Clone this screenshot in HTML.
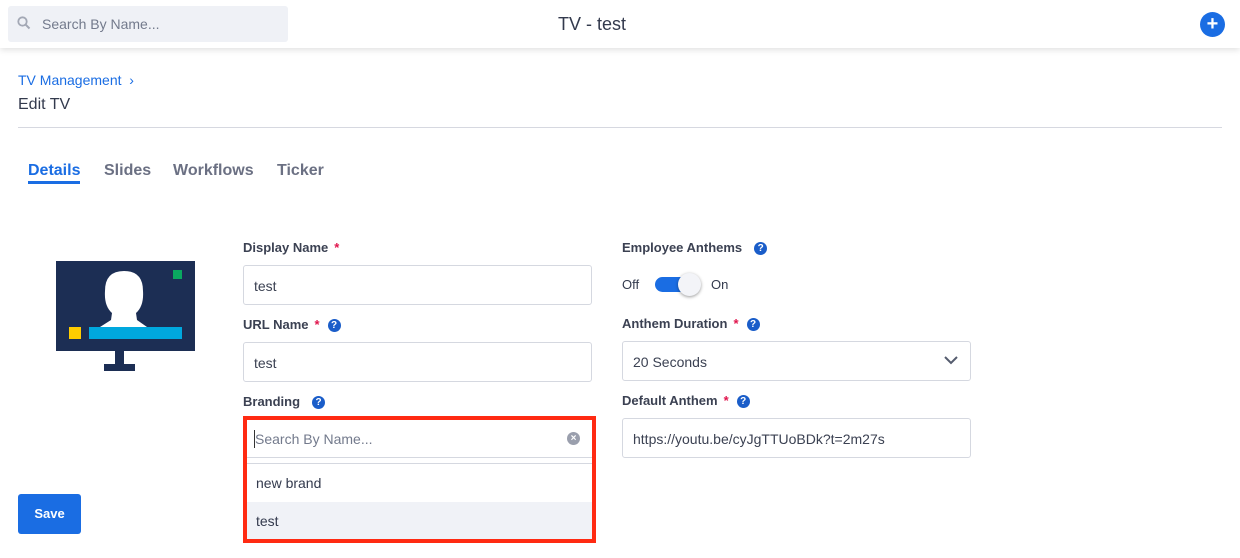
<!DOCTYPE html>
<html><head><style>
*{box-sizing:border-box;margin:0;padding:0}
body{width:1240px;height:558px;overflow:hidden;background:#fff;font-family:"Liberation Sans",sans-serif;color:#333a4d;position:relative}
.a{position:absolute}
.hdr{left:0;top:0;width:1240px;height:48px;background:#fff;box-shadow:0 2px 6px rgba(0,0,0,.12)}
.lbl{font-size:13px;font-weight:bold;color:#3b4152}
.star{color:#e0144c;margin-left:6px}
.q{display:inline-block;width:13px;height:13px;border-radius:50%;background:#1a5dc9;color:#fff;font-size:10px;font-weight:bold;text-align:center;line-height:13px;vertical-align:1px;margin-left:8px}
.inp{border:1px solid #d5d8e0;border-radius:3px;height:40px;font-size:14px;color:#3b4152;padding:0 10px;line-height:40px;width:349px}
</style></head><body>
<div class="a hdr"></div>
<div class="a" style="left:8px;top:6px;width:280px;height:36px;background:#eff1f6;border-radius:3px"></div>
<svg class="a" style="left:17px;top:16px" width="14" height="14" viewBox="0 0 14 14"><circle cx="5.5" cy="5.5" r="4.2" fill="none" stroke="#a3a8b5" stroke-width="1.8"/><line x1="8.6" y1="8.6" x2="12.5" y2="12.5" stroke="#a3a8b5" stroke-width="2"/></svg>
<div class="a" style="left:42px;top:16px;font-size:14px;color:#737a8c">Search By Name...</div>
<div class="a" style="left:540px;top:14px;width:104px;text-align:center;font-size:18px;color:#333a4d">TV - test</div>
<div class="a" style="left:1200px;top:12px;width:25px;height:25px;border-radius:50%;background:#1a6de3;color:#fff;font-size:20px;line-height:24px;text-align:center;font-weight:bold">+</div>
<div class="a" style="left:18px;top:72px;font-size:14px;color:#1a6de3">TV Management &nbsp;›</div>
<div class="a" style="left:18px;top:96px;font-size:16px;color:#333a4d">Edit TV</div>
<div class="a" style="left:18px;top:127px;width:1204px;height:1px;background:#d6d8e0"></div>
<div class="a" style="left:28px;top:162px;font-size:16px;font-weight:bold;color:#1a6de3">Details</div>
<div class="a" style="left:28px;top:181px;width:52px;height:3px;background:#1a6de3"></div>
<div class="a" style="left:104px;top:162px;font-size:16px;font-weight:bold;color:#6b7083">Slides</div>
<div class="a" style="left:173px;top:162px;font-size:16px;font-weight:bold;color:#6b7083">Workflows</div>
<div class="a" style="left:277px;top:162px;font-size:16px;font-weight:bold;color:#6b7083">Ticker</div>
<svg class="a" style="left:56px;top:261px" width="139" height="110" viewBox="0 0 139 110"><rect x="0" y="0" width="139" height="90" fill="#1c2e54"/><rect x="59" y="90" width="9" height="13" fill="#1c2e54"/><rect x="48" y="103" width="31" height="7" fill="#1c2e54"/><rect x="117" y="9" width="9" height="9" fill="#0aa860"/><rect x="13" y="66" width="12" height="12" fill="#ffcc00"/><rect x="33" y="66" width="93" height="12" fill="#00a8de"/><path d="M44 66 L55 59 L56 52 Q48 45 49 30 Q49 10 68 10 Q87 10 87 30 Q88 45 80 52 L81 59 L91 66 Z" fill="#fff"/></svg>
<div class="a lbl" style="left:243px;top:240px">Display Name<span class="star">*</span></div>
<div class="a inp" style="left:243px;top:265px">test</div>
<div class="a lbl" style="left:243px;top:317px">URL Name<span class="star">*</span><span class="q">?</span></div>
<div class="a inp" style="left:243px;top:342px">test</div>
<div class="a lbl" style="left:243px;top:394px">Branding<span class="q" style="margin-left:12px">?</span></div>
<div class="a" style="left:243px;top:416px;width:353px;height:127px;border:4px solid #ff2a12"></div>
<div class="a" style="left:247px;top:420px;width:345px;height:38px;background:#fff;border-bottom:1px solid #d5d8e0"></div>
<div class="a" style="left:254px;top:430px;width:1px;height:18px;background:#333"></div>
<div class="a" style="left:255px;top:431px;font-size:14px;color:#737a8c">Search By Name...</div>
<div class="a" style="left:567px;top:432px;width:13px;height:13px;border-radius:50%;background:#9a9fad;color:#fff;font-size:10px;line-height:13px;text-align:center;font-weight:bold">×</div>
<div class="a" style="left:247px;top:463px;width:345px;height:1px;background:#d5d8e0"></div>
<div class="a" style="left:256px;top:475px;font-size:14px;color:#333a4d">new brand</div>
<div class="a" style="left:247px;top:502px;width:345px;height:37px;background:#f0f2f7"></div>
<div class="a" style="left:256px;top:513px;font-size:14px;color:#333a4d">test</div>
<div class="a lbl" style="left:622px;top:240px">Employee Anthems<span class="q" style="margin-left:12px">?</span></div>
<div class="a" style="left:622px;top:277px;font-size:13px">Off</div>
<div class="a" style="left:655px;top:277px;width:44px;height:15px;border-radius:8px;background:#1a6de3"></div>
<div class="a" style="left:678px;top:273px;width:23px;height:23px;border-radius:50%;background:#f3f4f8;box-shadow:0 1px 3px rgba(0,0,0,.4)"></div>
<div class="a" style="left:711px;top:277px;font-size:13px">On</div>
<div class="a lbl" style="left:622px;top:316px">Anthem Duration<span class="star">*</span><span class="q">?</span></div>
<div class="a inp" style="left:622px;top:341px">20 Seconds</div>
<svg class="a" style="left:944px;top:356px" width="14" height="9" viewBox="0 0 14 9"><path d="M1 1 L7 7 L13 1" fill="none" stroke="#555c6e" stroke-width="2"/></svg>
<div class="a lbl" style="left:622px;top:393px">Default Anthem<span class="star">*</span><span class="q">?</span></div>
<div class="a inp" style="left:622px;top:418px">https://youtu.be/cyJgTTUoBDk?t=2m27s</div>
<div class="a" style="left:18px;top:494px;width:63px;height:40px;background:#1a6de3;border-radius:3px;color:#fff;font-size:13px;font-weight:bold;text-align:center;line-height:40px">Save</div>
</body></html>
